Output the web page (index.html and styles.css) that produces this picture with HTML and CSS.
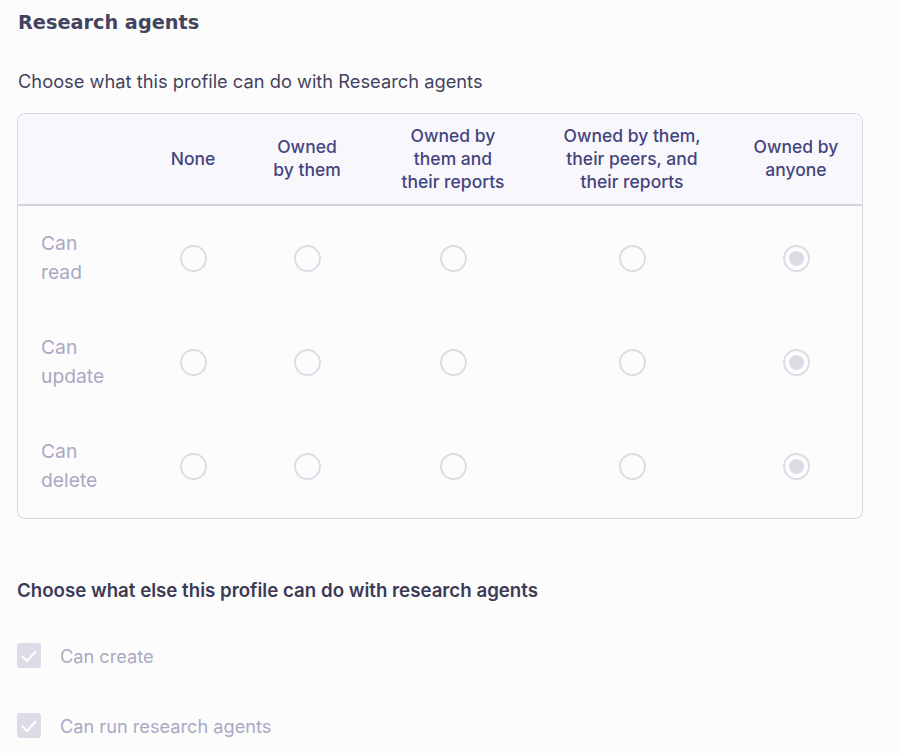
FILE: index.html
```html
<!DOCTYPE html>
<html>
<head>
<meta charset="utf-8">
<link rel="stylesheet" href="styles.css">
</head>
<body>
<div class="page">
  <h1 class="title">Research agents</h1>
  <p class="subtitle">Choose what this profile can do with Research agents</p>

  <div class="perm-table">
    <div class="row head">
      <div class="cell label"></div>
      <div class="cell">None</div>
      <div class="cell">Owned<br>by them</div>
      <div class="cell">Owned by<br>them and<br>their reports</div>
      <div class="cell">Owned by them,<br>their peers, and<br>their reports</div>
      <div class="cell last">Owned by<br>anyone</div>
    </div>
    <div class="row">
      <div class="cell label">Can<br>read</div>
      <div class="cell"><span class="radio"></span></div>
      <div class="cell"><span class="radio"></span></div>
      <div class="cell"><span class="radio"></span></div>
      <div class="cell"><span class="radio"></span></div>
      <div class="cell last"><span class="radio on"></span></div>
    </div>
    <div class="row">
      <div class="cell label">Can<br>update</div>
      <div class="cell"><span class="radio"></span></div>
      <div class="cell"><span class="radio"></span></div>
      <div class="cell"><span class="radio"></span></div>
      <div class="cell"><span class="radio"></span></div>
      <div class="cell last"><span class="radio on"></span></div>
    </div>
    <div class="row">
      <div class="cell label">Can<br>delete</div>
      <div class="cell"><span class="radio"></span></div>
      <div class="cell"><span class="radio"></span></div>
      <div class="cell"><span class="radio"></span></div>
      <div class="cell"><span class="radio"></span></div>
      <div class="cell last"><span class="radio on"></span></div>
    </div>
  </div>

  <h2 class="section">Choose what else this profile can do with research agents</h2>

  <div class="check-row">
    <span class="check"><svg viewBox="0 0 24 24" width="24" height="24"><path d="M5.5 12.5l4.5 4.5 8.5-9.5" fill="none" stroke="#ffffff" stroke-width="2" stroke-linecap="round" stroke-linejoin="round"/></svg></span>
    <span class="check-label">Can create</span>
  </div>
  <div class="check-row">
    <span class="check"><svg viewBox="0 0 24 24" width="24" height="24"><path d="M5.5 12.5l4.5 4.5 8.5-9.5" fill="none" stroke="#ffffff" stroke-width="2" stroke-linecap="round" stroke-linejoin="round"/></svg></span>
    <span class="check-label">Can run research agents</span>
  </div>
</div>
</body>
</html>
```

FILE: styles.css
```css
html, body {
  margin: 0;
  padding: 0;
  background: #fdfcfc;
}
body {
  font-family: "Inter", "Roboto", sans-serif;
  color: #3d3d5c;
}
.page {
  padding: 9px 0 0 17px;
  width: 846px;
}
.title {
  margin: 0 0 0 1px;
  font-family: "DejaVu Sans", "Inter", sans-serif;
  font-weight: 700;
  font-size: 19.3px;
  line-height: 28px;
  color: #43435f;
}
.subtitle {
  margin: 31px 0 0 1px;
  font-size: 18.3px;
  line-height: 26px;
  color: #43435f;
}
.perm-table {
  margin-top: 19px;
  border: 1px solid #d8d8e4;
  border-radius: 8px;
  overflow: hidden;
}
.row {
  display: grid;
  grid-template-columns: 118px 114px 114px 178px 180px 140px;
  height: 104px;
}
.row.head {
  height: 90px;
  background: #f8f8fc;
  border-bottom: 2px solid #d4d4d8;
}
.cell {
  display: flex;
  align-items: center;
  justify-content: center;
  text-align: center;
}
.cell.last {
  padding-left: 8px;
}
.head .cell {
  font-size: 17.5px;
  font-weight: 500;
  line-height: 23px;
  color: #45457e;
  padding-bottom: 2px;
}
.cell.label {
  justify-content: flex-start;
  text-align: left;
  padding-left: 23px;
  font-size: 19.3px;
  line-height: 29px;
  color: #a9a9c4;
}
.radio {
  box-sizing: border-box;
  width: 27px;
  height: 27px;
  border: 2px solid #dcdce6;
  border-radius: 50%;
  display: flex;
  align-items: center;
  justify-content: center;
}
.radio.on::after {
  content: "";
  width: 15px;
  height: 15px;
  border-radius: 50%;
  background: #dcdce6;
}
.section {
  margin: 60px 0 0 0;
  font-size: 18.7px;
  font-weight: 600;
  line-height: 24px;
  color: #3b3b55;
}
.check-row {
  display: flex;
  align-items: center;
  gap: 19px;
  margin-top: 40px;
}
.check-row + .check-row {
  margin-top: 45px;
}
.check {
  width: 24px;
  height: 25px;
  border-radius: 3px;
  background: #dcdce6;
  display: flex;
  align-items: center;
  justify-content: center;
}
.check-label {
  font-size: 18.2px;
  line-height: 24px;
  color: #a9a9c4;
}
```
